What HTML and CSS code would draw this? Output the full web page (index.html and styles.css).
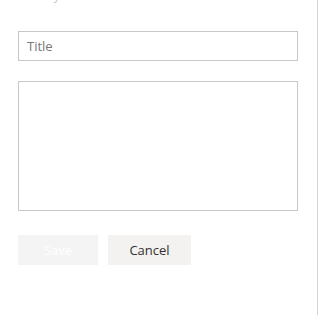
FILE: index.html
```html
<!DOCTYPE html>
<html>
<head>
<meta charset="utf-8">
<link rel="stylesheet" href="styles.css">
</head>
<body>
<div class="panel">
  <div class="heading">Key</div>
  <form class="form">
    <input class="field" type="text" placeholder="Title">
    <textarea class="area"></textarea>
    <div class="actions">
      <button type="button" class="btn btn-save" disabled>Save</button>
      <button type="button" class="btn btn-cancel">Cancel</button>
    </div>
  </form>
</div>
</body>
</html>
```
FILE: styles.css
```css
html, body {
  margin: 0;
  padding: 0;
  background: #ffffff;
}
body {
  font-family: "Open Sans", "Noto Sans", sans-serif;
  overflow: hidden;
}
.panel {
  box-sizing: border-box;
  width: 318px;
  height: 328px;
  border-right: 1px solid #d4d4d4;
  padding: 0 21px 0 18px;
}
.heading {
  height: 14px;
  margin-top: -13px;
  padding-left: 19px;
  font-size: 14px;
  line-height: 14px;
  color: #c4cedd;
}
.form {
  display: flex;
  flex-direction: column;
  margin-top: 30px;
}
.field {
  box-sizing: border-box;
  width: 280px;
  height: 30px;
  margin: 0;
  border: 1px solid #c8c8c8;
  border-radius: 0;
  padding: 0 8px;
  font-family: inherit;
  font-size: 13px;
  color: #333333;
  outline: none;
}
.field::placeholder {
  color: #777777;
}
.area {
  box-sizing: border-box;
  width: 280px;
  height: 130px;
  margin: 20px 0 0 0;
  border: 1px solid #c8c8c8;
  border-radius: 0;
  padding: 6px 8px;
  resize: none;
  font-family: inherit;
  font-size: 13px;
  outline: none;
}
.actions {
  display: flex;
  gap: 10px;
  margin-top: 24px;
}
.btn {
  box-sizing: border-box;
  height: 30px;
  min-width: 80px;
  padding: 0 21px;
  border: none;
  border-radius: 0;
  font-family: inherit;
  font-size: 13px;
  cursor: pointer;
}
.btn-save {
  background: #f4f4f4;
  color: #ffffff;
}
.btn-cancel {
  min-width: 83px;
  background: #f3f2f1;
  color: #323130;
}
```
